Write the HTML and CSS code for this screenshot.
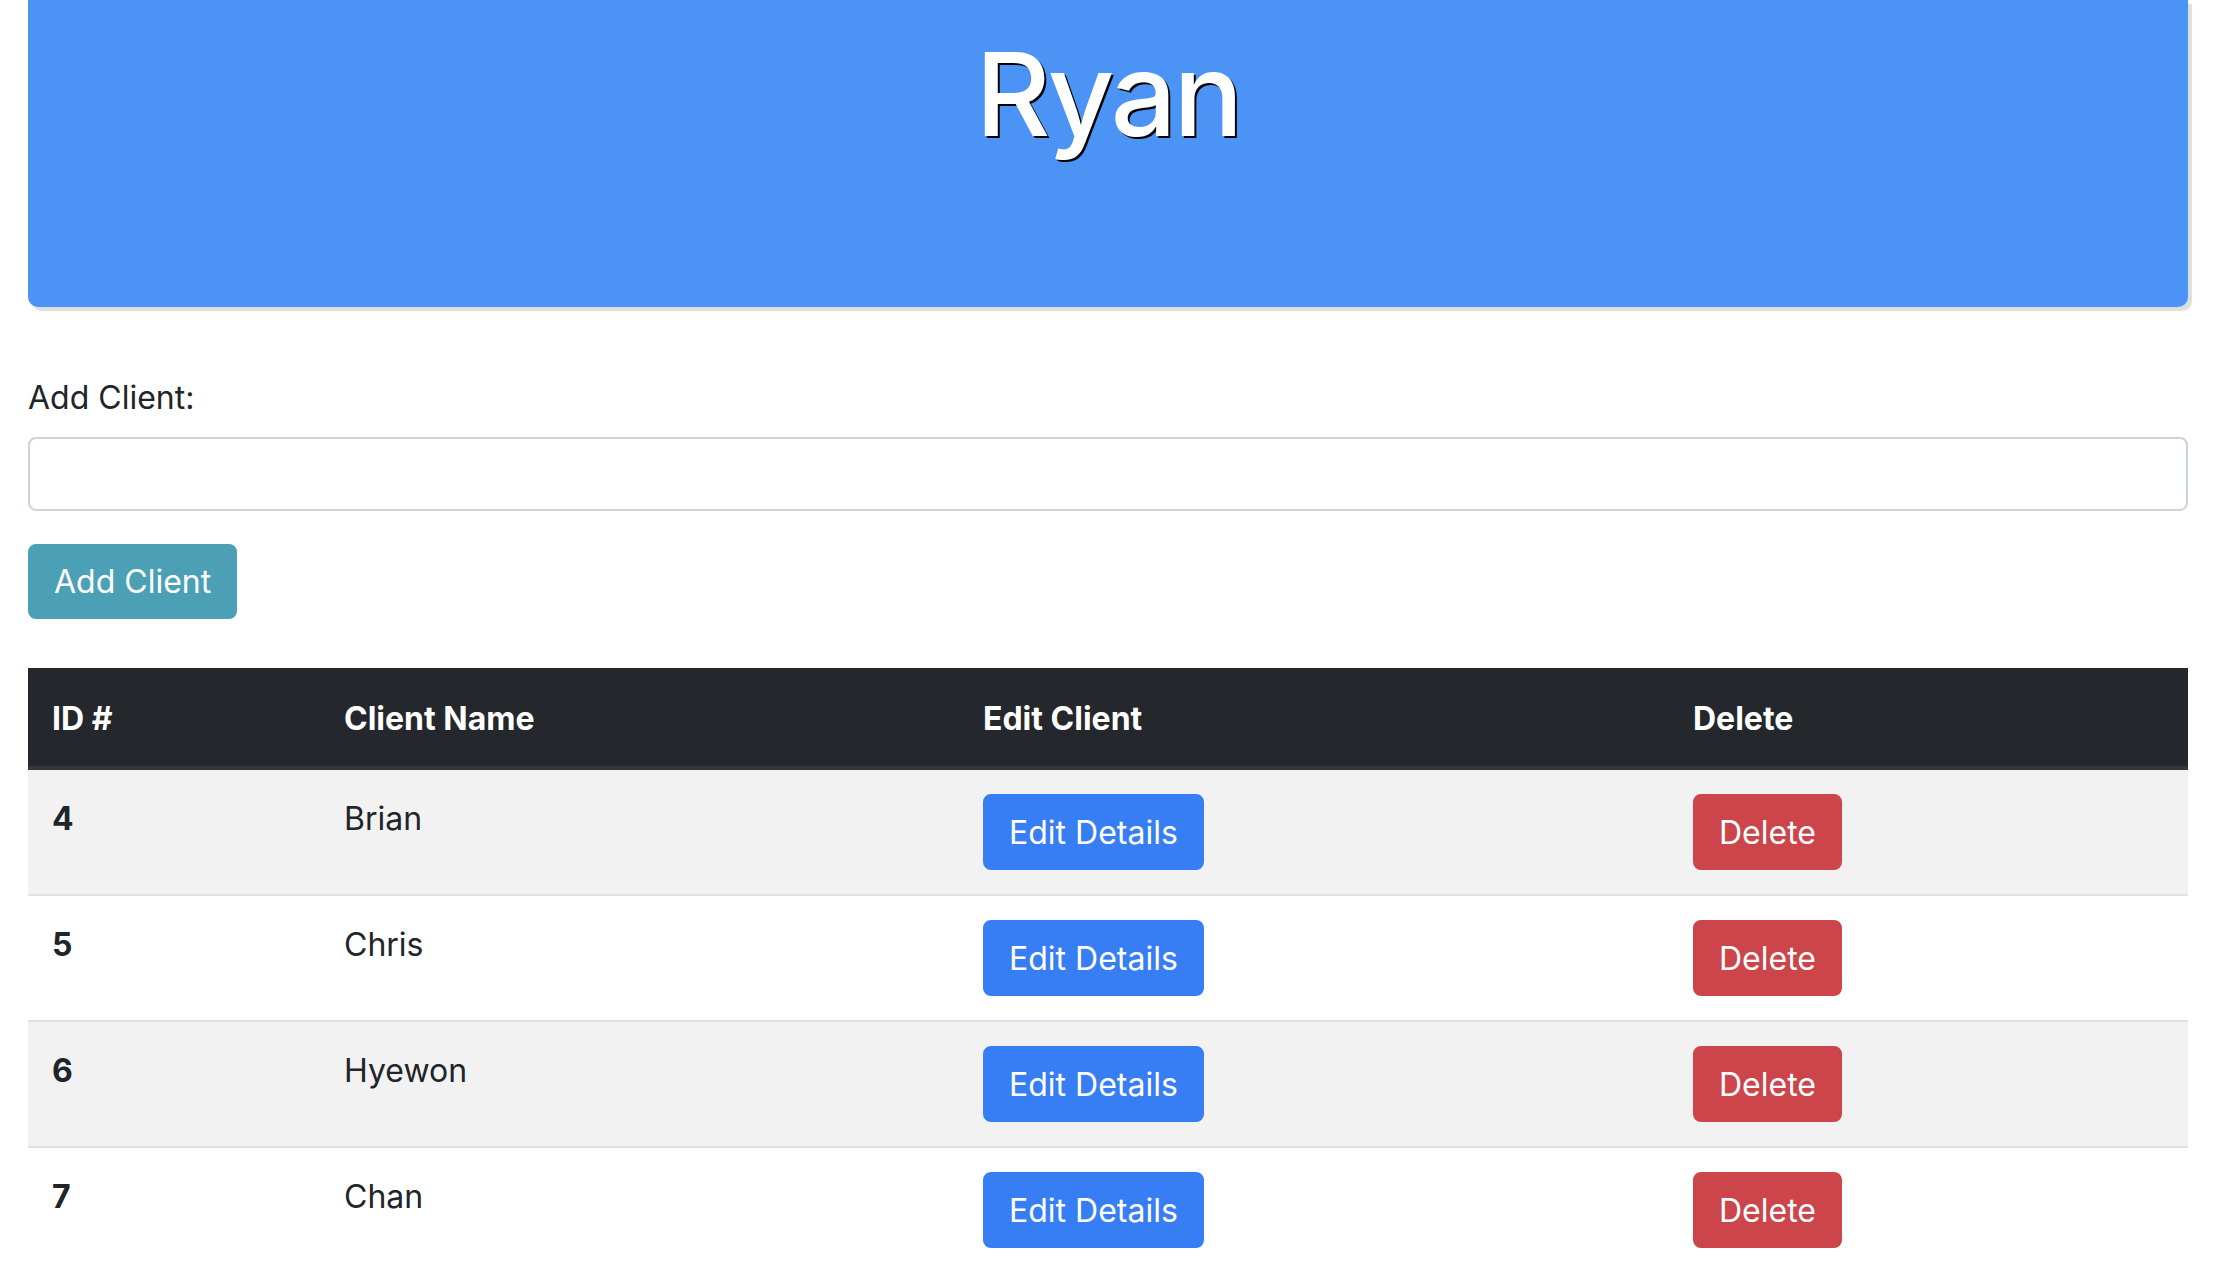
FILE: index.html
```html
<!DOCTYPE html>
<html lang="en">
<head>
<meta charset="utf-8">
<title>Ryan</title>
<link rel="stylesheet" href="styles.css">
</head>
<body>
<div class="page">
  <header class="jumbo">
    <h1 class="jumbo-title">Ryan</h1>
  </header>

  <form class="add-form">
    <div class="form-group">
      <label class="form-label" for="client">Add Client:</label>
      <input class="form-control" id="client" type="text">
    </div>
    <button class="btn btn-info" type="button">Add Client</button>
  </form>

  <table class="clients">
    <colgroup>
      <col class="c-id">
      <col class="c-name">
      <col class="c-edit">
      <col class="c-del">
    </colgroup>
    <thead>
      <tr>
        <th>ID #</th>
        <th>Client Name</th>
        <th>Edit Client</th>
        <th>Delete</th>
      </tr>
    </thead>
    <tbody>
      <tr>
        <th class="row-id">4</th>
        <td class="cell-text">Brian</td>
        <td><button class="btn btn-primary" type="button">Edit Details</button></td>
        <td><button class="btn btn-danger" type="button">Delete</button></td>
      </tr>
      <tr>
        <th class="row-id">5</th>
        <td class="cell-text">Chris</td>
        <td><button class="btn btn-primary" type="button">Edit Details</button></td>
        <td><button class="btn btn-danger" type="button">Delete</button></td>
      </tr>
      <tr>
        <th class="row-id">6</th>
        <td class="cell-text">Hyewon</td>
        <td><button class="btn btn-primary" type="button">Edit Details</button></td>
        <td><button class="btn btn-danger" type="button">Delete</button></td>
      </tr>
      <tr>
        <th class="row-id">7</th>
        <td class="cell-text">Chan</td>
        <td><button class="btn btn-primary" type="button">Edit Details</button></td>
        <td><button class="btn btn-danger" type="button">Delete</button></td>
      </tr>
    </tbody>
  </table>
</div>
</body>
</html>
```
FILE: styles.css
```css
* { box-sizing: border-box; }

html, body {
  margin: 0;
  padding: 0;
  background: #ffffff;
}

body {
  font-family: Inter, "Noto Sans", "Liberation Sans", sans-serif;
  font-size: 32px;
  line-height: 48px;
  color: #212529;
}

.page {
  padding: 0 26px 0 28px;
}

.jumbo {
  height: 307px;
  background: #4b94f5;
  border-radius: 0 0 10px 10px;
  box-shadow: 4px 4px 1px #dedede;
  padding-top: 24px;
}

.jumbo-title {
  margin: 0;
  text-align: center;
  font-family: Inter, "Liberation Sans", sans-serif;
  font-weight: 500;
  font-size: 116px;
  line-height: 140px;
  letter-spacing: -3px;
  color: #ffffff;
  text-shadow: 2px 2px 0 #000000;
}

.add-form {
  margin-top: 67px;
}

.form-group {
  margin-bottom: 33px;
}

.form-label {
  display: block;
  margin-bottom: 15px;
}

.form-control {
  display: block;
  width: 100%;
  height: 74px;
  border: 2px solid #ced4da;
  border-radius: 8px;
  background: #ffffff;
  font: inherit;
  padding: 12px 24px;
}

.btn {
  display: inline-block;
  font-family: inherit;
  font-size: 32px;
  line-height: 48px;
  font-weight: 400;
  color: #ffffff;
  padding: 13px 24px 11px;
  border: 2px solid transparent;
  border-radius: 8px;
  cursor: pointer;
  margin: 0;
}

.btn-info { background: #4ba0b6; border-color: #4ba0b6; height: 75px; padding-top: 12px; padding-bottom: 11px; }
.btn-primary { background: #377ef5; border-color: #377ef5; }
.btn-danger { background: #cb454b; border-color: #cb454b; }

.clients {
  margin-top: 49px;
  width: 100%;
  table-layout: fixed;
  border-collapse: separate;
  border-spacing: 0;
}

.c-id { width: 292px; }
.c-name { width: 639px; }
.c-edit { width: 710px; }
.c-del { width: 519px; }

.clients thead th {
  background: #24272b;
  color: #ffffff;
  font-weight: 700;
  text-align: left;
  padding: 27px 24px 23px;
  border-bottom: 4px solid #32383e;
  vertical-align: top;
}

.clients tbody th,
.clients tbody td {
  padding: 24px;
  vertical-align: top;
  text-align: left;
  border-top: 2px solid #dee2e6;
}

.clients tbody .row-id,
.clients tbody .cell-text {
  padding-top: 25px;
  padding-bottom: 23px;
}

.clients tbody tr:first-child th,
.clients tbody tr:first-child td {
  border-top: 0;
}

.clients tbody tr:nth-child(odd) {
  background: #f2f2f2;
}

.row-id {
  font-weight: 700;
}
```
